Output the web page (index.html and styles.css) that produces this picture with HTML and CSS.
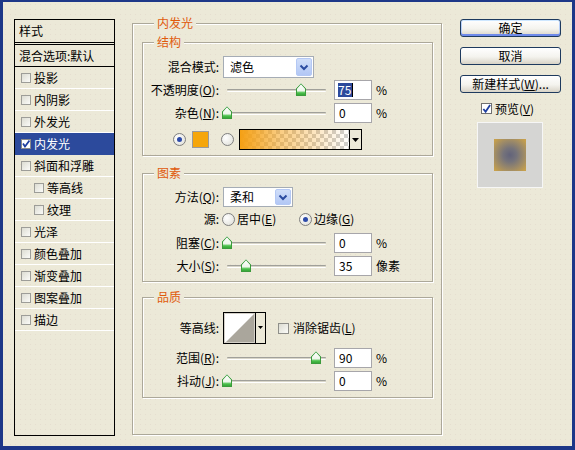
FILE: index.html
```html
<!DOCTYPE html>
<html>
<head>
<meta charset="utf-8">
<link rel="stylesheet" href="styles.css">
</head>
<body>
<div class="window">
  <div class="styles-list">
    <div class="list-head">样式</div>
    <div class="list-blend">混合选项:默认</div>
    <div class="list-item"><span class="cb"></span>投影</div>
    <div class="list-item"><span class="cb"></span>内阴影</div>
    <div class="list-item"><span class="cb"></span>外发光</div>
    <div class="list-item sel"><span class="cb on"><svg width="8" height="8" viewBox="0 0 8 8"><path d="M1 3.5 L3 6.5 L7.5 0.5" fill="none" stroke="#1f3fa0" stroke-width="1.8"/></svg></span>内发光</div>
    <div class="list-item"><span class="cb"></span>斜面和浮雕</div>
    <div class="list-item sub"><span class="cb"></span>等高线</div>
    <div class="list-item sub"><span class="cb"></span>纹理</div>
    <div class="list-item"><span class="cb"></span>光泽</div>
    <div class="list-item"><span class="cb"></span>颜色叠加</div>
    <div class="list-item"><span class="cb"></span>渐变叠加</div>
    <div class="list-item"><span class="cb"></span>图案叠加</div>
    <div class="list-item"><span class="cb"></span>描边</div>
  </div>

  <div class="main group">
    <div class="group-title outer-title">内发光</div>

    <div class="group g1">
      <div class="group-title">结构</div>
      <div class="row h22 m7">
        <span class="lbl">混合模式:</span>
        <div class="select w91"><span class="sel-text">滤色</span><span class="drop"><svg width="10" height="7" viewBox="0 0 10 7"><path d="M1.5 1.5 L5 5 L8.5 1.5" fill="none" stroke="#2b4ba0" stroke-width="2"/></svg></span></div>
      </div>
      <div class="row h20 m2">
        <span class="lbl">不透明度(<u>O</u>):</span>
        <div class="slider"><div class="track"></div><span class="thumb" style="left:73px"></span></div>
        <span class="num"><span class="hl">75</span><span class="caret"></span></span><span class="unit">%</span>
      </div>
      <div class="row h20 m3">
        <span class="lbl">杂色(<u>N</u>):</span>
        <div class="slider"><div class="track"></div><span class="thumb" style="left:-1px"></span></div>
        <span class="num">0</span><span class="unit">%</span>
      </div>
      <div class="row h21 m6 color-row">
        <span class="radio on"></span>
        <span class="swatch"></span>
        <span class="radio r2"></span>
        <div class="grad"><span class="grad-fill"></span><span class="grad-drop"><svg width="7" height="4" viewBox="0 0 7 4"><path d="M0 0 H7 L3.5 4 Z" fill="#000"/></svg></span></div>
      </div>
    </div>

    <div class="group g2">
      <div class="group-title">图素</div>
      <div class="row h20 m7">
        <span class="lbl">方法(<u>Q</u>):</span>
        <div class="select w70"><span class="sel-text">柔和</span><span class="drop"><svg width="10" height="7" viewBox="0 0 10 7"><path d="M1.5 1.5 L5 5 L8.5 1.5" fill="none" stroke="#2b4ba0" stroke-width="2"/></svg></span></div>
      </div>
      <div class="row h20 m2">
        <span class="lbl">源:</span>
        <span class="opt first"><span class="radio"></span>居中(<u>E</u>)</span>
        <span class="opt"><span class="radio on"></span>边缘(<u>G</u>)</span>
      </div>
      <div class="row h20 m4">
        <span class="lbl">阻塞(<u>C</u>):</span>
        <div class="slider"><div class="track"></div><span class="thumb" style="left:-1px"></span></div>
        <span class="num">0</span><span class="unit">%</span>
      </div>
      <div class="row h20 m3">
        <span class="lbl">大小(<u>S</u>):</span>
        <div class="slider"><div class="track"></div><span class="thumb" style="left:18px"></span></div>
        <span class="num">35</span><span class="unit">像素</span>
      </div>
    </div>

    <div class="group g3">
      <div class="group-title">品质</div>
      <div class="row h32 m8">
        <span class="lbl">等高线:</span>
        <svg class="contour" width="43" height="32" viewBox="0 0 43 32">
          <rect x="0.5" y="0.5" width="42" height="31" fill="#ECE9D8" stroke="#000"/>
          <rect x="1.5" y="1.5" width="30" height="29" fill="#fff" stroke="#d4d0c8"/>
          <polygon points="3,30 31,2 31,30" fill="#aaa69c"/>
          <rect x="32" y="1" width="1" height="30" fill="#000"/>
          <path d="M35 14 H40 L37.5 17 Z" fill="#000"/>
        </svg>
        <span class="cbox"></span><span class="cbox-label">消除锯齿(<u>L</u>)</span>
      </div>
      <div class="row h20 m4">
        <span class="lbl">范围(<u>R</u>):</span>
        <div class="slider"><div class="track"></div><span class="thumb" style="left:88px"></span></div>
        <span class="num">90</span><span class="unit">%</span>
      </div>
      <div class="row h20 m3">
        <span class="lbl">抖动(<u>J</u>):</span>
        <div class="slider"><div class="track"></div><span class="thumb" style="left:-1px"></span></div>
        <span class="num">0</span><span class="unit">%</span>
      </div>
    </div>
  </div>

  <div class="side">
    <div class="btn default">确定</div>
    <div class="btn">取消</div>
    <div class="btn">新建样式(<u>W</u>)...</div>
    <div class="preview-check"><span class="pcb"><svg width="10" height="10" viewBox="0 0 10 10"><path d="M1.5 5 L4 8 L9 0.5" fill="none" stroke="#1f3fa0" stroke-width="2"/></svg></span>预览(<u>V</u>)</div>
    <div class="preview-box"><div class="preview-square"></div></div>
  </div>
</div>
</body>
</html>
```

FILE: styles.css
```css
* { box-sizing: border-box; }
html, body { margin: 0; padding: 0; }
body {
  font-family: "Noto Sans CJK SC", "Noto Sans", sans-serif;
  font-size: 12px;
  line-height: 14px;
  color: #000;
  background: #1d3788;
}
u { text-decoration: underline; text-underline-offset: 1px; }

.window {
  width: 575px;
  height: 450px;
  border-style: solid;
  border-color: #1d3788;
  border-width: 2px 3px 4px 3px;
  background-color: #ECE9D8;
  background-image: radial-gradient(circle, rgba(220, 200, 190, 0.35) 0.6px, transparent 0.8px);
  background-size: 5px 5px;
  display: flex;
  align-items: flex-start;
  padding-top: 17px;
}

/* left styles list */
.styles-list {
  margin-left: 11px;
  width: 101px;
  height: 417px;
  border: 1px solid #000;
  display: flex;
  flex-direction: column;
}
.list-head {
  height: 25px;
  padding: 4px 0 0 4px;
  border-bottom: 3px double #000;
}
.list-blend {
  height: 22px;
  padding: 4px 0 0 4px;
  border-bottom: 1px solid #000;
}
.list-item {
  height: 22px;
  display: flex;
  align-items: center;
  padding-left: 6px;
  border-bottom: 1px solid #fff;
}
.list-item.sub { padding-left: 19px; }
.list-item.sel {
  background: #2c4a9c;
  color: #fff;
  border-bottom-color: #2c4a9c;
}
.cb {
  width: 10px;
  height: 10px;
  margin-right: 3px;
  border: 1px solid #9d9d98;
  background: linear-gradient(135deg, #dcdcd2, #fbfbf8);
  display: flex;
  align-items: center;
  justify-content: center;
}
.cb.on { background: #fff; border-color: #8a8a8a; }

/* groups */
.group {
  border: 1px solid #aca899;
  box-shadow: inset 1px 1px 0 #fff, 1px 1px 0 #fff;
  display: flex;
  flex-direction: column;
}
.main {
  margin-left: 17px;
  margin-top: 4px;
  width: 310px;
  height: 412px;
  padding: 0 8px 0 9px;
}
.group-title {
  align-self: flex-start;
  margin: -8px 0 0 11px;
  padding: 0 3px;
  line-height: 14px;
  height: 14px;
  color: #e05a0c;
  background: #ECE9D8;
}
.outer-title { margin-left: 12px; }
.g1 { margin-top: 12px; padding-bottom: 5px; }
.g2 { margin-top: 17px; padding-bottom: 5px; }
.g3 { margin-top: 15px; padding-bottom: 6px; }

.row { display: flex; align-items: center; flex-shrink: 0; }
.h20 { height: 20px; }
.h21 { height: 21px; }
.h22 { height: 22px; }
.h32 { height: 32px; }
.m2 { margin-top: 2px; }
.m3 { margin-top: 3px; }
.m4 { margin-top: 4px; }
.m6 { margin-top: 6px; }
.m7 { margin-top: 7px; }
.m8 { margin-top: 8px; }

.lbl {
  width: 80px;
  padding-right: 4px;
  text-align: right;
  white-space: nowrap;
  flex-shrink: 0;
}

/* select */
.select {
  height: 100%;
  border: 1px solid #a5acb5;
  background: #fff;
  padding: 1px;
  display: flex;
  align-items: center;
}
.w91 { width: 91px; }
.w70 { width: 70px; }
.sel-text { flex: 1; padding-left: 5px; }
.drop {
  width: 16px;
  height: 100%;
  border: 1px solid #b4c8f4;
  border-radius: 2px;
  background: linear-gradient(#d0def9, #b2c7f5);
  display: flex;
  align-items: center;
  justify-content: center;
}

/* slider */
.slider {
  position: relative;
  width: 108px;
  height: 20px;
  display: flex;
  align-items: center;
  flex-shrink: 0;
}
.track {
  margin: 0 5px 0 4px;
  flex: 1;
  height: 3px;
  border-top: 1px solid #a0a09a;
  border-bottom: 1px solid #fff;
  background: #d8d5c8;
  border-radius: 1px;
}
.thumb {
  position: absolute;
  top: 3px;
  width: 10px;
  height: 13px;
  background: linear-gradient(#fff 0, #eef6ea 60%, #4cc24c 75%, #2f9a2f 100%);
  clip-path: polygon(50% 0, 100% 40%, 100% 100%, 0 100%, 0 40%);
}
.thumb::before {
  content: "";
  position: absolute;
  inset: 0;
  background: #3b9b3b;
  clip-path: polygon(50% 0, 100% 40%, 100% 100%, 0 100%, 0 40%, 1px 40%, 1px calc(100% - 1px), calc(100% - 1px) calc(100% - 1px), calc(100% - 1px) 45%, 50% 9%, 1px 45%, 0 40%);
}

/* numeric input */
.num {
  width: 38px;
  height: 20px;
  margin-left: 3px;
  border: 1px solid #a7a6aa;
  background: #fff;
  padding-left: 4px;
  line-height: 18px;
  display: flex;
  align-items: center;
  flex-shrink: 0;
}
.hl { background: #2c4a9c; color: #fff; line-height: 14px; padding: 0 1px 0 0; margin-left: -1px; }
.caret { width: 1px; height: 14px; background: #000; }
.unit { margin-left: 4px; white-space: nowrap; }

/* radios */
.radio {
  width: 13px;
  height: 13px;
  border-radius: 50%;
  border: 1px solid #7f7f7f;
  background: radial-gradient(circle at 35% 35%, #fff, #dcdcd4);
  flex-shrink: 0;
  display: inline-block;
  position: relative;
}
.radio.on::after {
  content: "";
  position: absolute;
  left: 3px;
  top: 3px;
  width: 5px;
  height: 5px;
  border-radius: 50%;
  background: #2c4aa8;
}
.color-row { padding-left: 30px; }
.swatch {
  width: 17px;
  height: 17px;
  margin-left: 6px;
  border: 1px solid #9a9a9a;
  background: #f5a60a;
}
.radio.r2 { margin-left: 12px; }
.grad {
  margin-left: 5px;
  width: 123px;
  height: 21px;
  border: 1px solid #000;
  display: flex;
}
.grad-fill {
  flex: 1;
  background:
    linear-gradient(to right, rgba(245, 160, 20, 1) 0%, rgba(245, 160, 20, 0.55) 35%, rgba(245, 160, 20, 0) 100%),
    repeating-conic-gradient(#cfcfcf 0 25%, #fff 0 50%) 0 0 / 8px 8px;
}
.grad-drop {
  width: 12px;
  border-left: 1px solid #000;
  background: #ECE9D8;
  display: flex;
  align-items: center;
  justify-content: center;
}

.opt { display: flex; align-items: center; white-space: nowrap; }
.opt .radio { margin-right: 2px; }
.opt.first { width: 77px; margin-left: -1px; }

/* contour */
.contour { flex-shrink: 0; }
.cbox {
  width: 11px;
  height: 11px;
  margin-left: 12px;
  border: 1px solid #8f8f8a;
  background: linear-gradient(135deg, #dcdcd2, #fbfbf8);
  flex-shrink: 0;
}
.cbox-label { margin-left: 4px; white-space: nowrap; }

/* side */
.side {
  margin-left: 18px;
  width: 101px;
  display: flex;
  flex-direction: column;
}
.btn {
  height: 18px;
  margin-bottom: 10px;
  border: 1px solid #1e3a5e;
  border-radius: 3px;
  background: linear-gradient(#ffffff, #f4f3ee 55%, #d8d3c6);
  text-align: center;
  line-height: 16px;
  white-space: nowrap;
}
.btn.default {
  box-shadow: inset 0 1px 0 #cee7ff, inset 0 -2px 0 #6f8aea, inset 1px 0 0 #b9d1fa, inset -1px 0 0 #b9d1fa;
}
.preview-check {
  margin-top: -1px;
  margin-left: 21px;
  height: 13px;
  display: flex;
  align-items: center;
  white-space: nowrap;
}
.pcb {
  width: 11px;
  height: 11px;
  margin-right: 3px;
  border: 1px solid #707070;
  background: #fff;
  display: flex;
  align-items: center;
  justify-content: center;
}
.preview-box {
  margin-top: 7px;
  margin-left: 17px;
  width: 66px;
  height: 66px;
  border: 1px solid #f6f6f6;
  background: #d5d5d3;
  display: flex;
  align-items: center;
  justify-content: center;
}
.preview-square {
  width: 32px;
  height: 32px;
  background: radial-gradient(circle at center, #62637a 0%, #75737a 30%, #a08c66 65%, #c9a14a 95%);
}
```
